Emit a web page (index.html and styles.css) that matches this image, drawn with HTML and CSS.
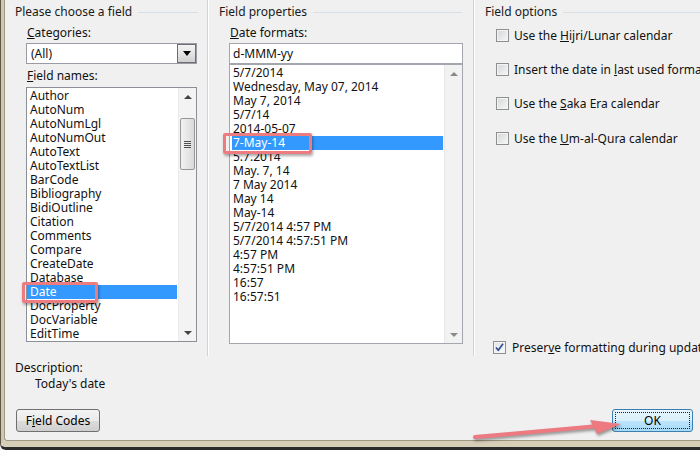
FILE: index.html
```html
<!DOCTYPE html>
<html>
<head>
<meta charset="utf-8">
<link rel="stylesheet" href="styles.css">
</head>
<body>
<div class="window">
  <div class="frame">
    <div class="client">
      <div class="columns">
        <section class="col col-left">
          <div class="group-title">Please choose a field</div>
          <div class="col-body">
            <div class="label lbl-first"><u>C</u>ategories:</div>
            <div class="combo">
              <span class="combo-text">(All)</span>
              <span class="combo-btn"><span class="tri-down"></span></span>
            </div>
            <div class="label lbl-names"><u>F</u>ield names:</div>
            <div class="listbox names">
              <ul class="items">
                <li>Author</li>
                <li>AutoNum</li>
                <li>AutoNumLgl</li>
                <li>AutoNumOut</li>
                <li>AutoText</li>
                <li>AutoTextList</li>
                <li>BarCode</li>
                <li>Bibliography</li>
                <li>BidiOutline</li>
                <li>Citation</li>
                <li>Comments</li>
                <li>Compare</li>
                <li>CreateDate</li>
                <li>Database</li>
                <li class="sel">Date</li>
                <li>DocProperty</li>
                <li>DocVariable</li>
                <li>EditTime</li>
              </ul>
              <div class="vscroll">
                <span class="sb-arrow"><span class="tri-up"></span></span>
                <span class="thumb"><span class="grip"></span></span>
                <span class="sb-arrow bottom"><span class="tri-down small"></span></span>
              </div>
            </div>
          </div>
        </section>
        <div class="sep"></div>
        <section class="col col-mid">
          <div class="group-title">Field properties</div>
          <div class="col-body">
            <div class="label lbl-first"><u>D</u>ate formats:</div>
            <div class="textbox">d-MMM-yy</div>
            <div class="listbox formats">
              <ul class="items">
                <li>5/7/2014</li>
                <li>Wednesday, May 07, 2014</li>
                <li>May 7, 2014</li>
                <li>5/7/14</li>
                <li>2014-05-07</li>
                <li class="sel">7-May-14</li>
                <li>5.7.2014</li>
                <li>May. 7, 14</li>
                <li>7 May 2014</li>
                <li>May 14</li>
                <li>May-14</li>
                <li>5/7/2014 4:57 PM</li>
                <li>5/7/2014 4:57:51 PM</li>
                <li>4:57 PM</li>
                <li>4:57:51 PM</li>
                <li>16:57</li>
                <li>16:57:51</li>
              </ul>
              <div class="vscroll flat">
                <span class="sb-arrow"><span class="tri-up light"></span></span>
                <span class="sb-arrow bottom"><span class="tri-down small light"></span></span>
              </div>
            </div>
          </div>
        </section>
        <div class="sep"></div>
        <section class="col col-right">
          <div class="group-title">Field options</div>
          <div class="opt opt-1"><span class="check"></span><span>Use the <u>H</u>ijri/Lunar calendar</span></div>
          <div class="opt"><span class="check"></span><span>Insert the date in <u>l</u>ast used format</span></div>
          <div class="opt"><span class="check"></span><span>Use the <u>S</u>aka Era calendar</span></div>
          <div class="opt opt-4"><span class="check"></span><span>Use the <u>U</u>m-al-Qura calendar</span></div>
          <div class="opt preserve">
            <span class="check checked"><svg width="11" height="11" viewBox="0 0 11 11"><path d="M2 5.5 L4.3 8.3 L9 1.8" fill="none" stroke="#2f4f92" stroke-width="1.7" stroke-linejoin="round"/></svg></span>
            <span>Preser<u>v</u>e formatting during updates</span>
          </div>
        </section>
      </div>
      <div class="footer">
        <div class="desc-label">Description:</div>
        <div class="desc-value">Today's date</div>
        <div class="buttons">
          <button class="btn btn-codes">F<u>i</u>eld Codes</button>
          <button class="btn btn-ok"><span class="focus">OK</span></button>
        </div>
      </div>
    </div>
  </div>
  <div class="mark mark-date"></div>
  <div class="mark mark-format"></div>
  <svg class="arrow" width="700" height="450" viewBox="0 0 700 450">
    <path d="M474 437 L598 426" stroke="#ec7a80" stroke-width="4" stroke-linecap="round" fill="none"/>
    <polygon points="589,420 620,424 596,434" fill="#ec7a80"/>
  </svg>
</div>
</body>
</html>
```

FILE: styles.css
```css
* { box-sizing: border-box; }

body {
  margin: 0;
  background: #f0f0f0;
  font-family: "Noto Sans", "Open Sans", sans-serif;
  font-size: 12px;
  color: #111;
}

u { text-decoration: underline; text-underline-offset: 1px; }

.window {
  position: relative;
  width: 700px;
  height: 450px;
  overflow: hidden;
  border-left: 1px solid #5e5646;
  border-bottom: 3px solid #2b2b2b;
  border-bottom-left-radius: 6px;
  background: #f0f0f0;
}

.frame {
  border-left: 3px solid #cfc6ac;
  border-bottom: 6px solid #d6ceb6;
  border-bottom-left-radius: 5px;
}

.client {
  width: 696px;
  height: 441px;
  border-left: 1px solid #9f9886;
  border-bottom: 1px solid #9f9886;
  border-bottom-left-radius: 3px;
  display: flex;
  flex-direction: column;
  background: #f0f0f0;
}

.columns {
  display: flex;
  height: 356px;
}

.col { display: flex; flex-direction: column; }
.col-left { width: 202px; }
.col-mid { width: 264px; }
.col-right { flex: 1; min-width: 0; }

.sep {
  width: 2px;
  border-left: 1px solid #d2d2d2;
  border-right: 1px solid #ffffff;
}

.group-title {
  display: flex;
  align-items: center;
  height: 16px;
  line-height: 16px;
  margin-top: 4px;
  padding-left: 10px;
  white-space: nowrap;
  color: #1a1a1a;
}
.group-title::after {
  content: "";
  flex: 1;
  height: 1px;
  margin-left: 6px;
  background: #d9e0e5;
}
.col-left .group-title { margin-right: 9px; }
.col-mid .group-title { margin-right: 11px; }

.col-body { padding-left: 21px; display: flex; flex-direction: column; }
.col-mid .col-body { padding-left: 20px; }

.label { line-height: 16px; padding-left: 1px; white-space: nowrap; }
.lbl-first { margin-top: 5px; }
.lbl-names { margin-top: 4px; }

.combo {
  display: flex;
  width: 171px;
  height: 21px;
  margin-top: 2px;
  border: 1px solid #9a9ca3;
  background: #fff;
}
.combo-text { flex: 1; padding-left: 4px; line-height: 19px; }
.combo-btn {
  width: 19px;
  margin: 0;
  border: 1px solid #6f6f6f;
  background: linear-gradient(#f4f4f4, #e4e4e4 50%, #cfcfcf);
  display: flex;
  align-items: center;
  justify-content: center;
}

.tri-down {
  width: 0; height: 0;
  border-left: 4px solid transparent;
  border-right: 4px solid transparent;
  border-top: 5px solid #000;
}
.tri-down.small { border-left-width: 4px; border-right-width: 4px; border-top: 4px solid #444; }
.tri-up {
  width: 0; height: 0;
  border-left: 4px solid transparent;
  border-right: 4px solid transparent;
  border-bottom: 4px solid #444;
}
.tri-up.light { border-bottom-color: #8a8a8a; }
.tri-down.light { border-top-color: #8a8a8a; }

.textbox {
  width: 234px;
  height: 21px;
  margin-top: 2px;
  border: 1px solid #a3a6ad;
  background: #fff;
  line-height: 19px;
  padding-left: 3px;
}

.listbox {
  display: flex;
  width: 171px;
  height: 255px;
  margin-top: 3px;
  border: 1px solid #8c8f96;
  background: #fff;
  overflow: hidden;
}
.listbox.formats {
  width: 234px;
  height: 280px;
  margin-top: 0;
  border-color: #a3a6ad;
}

.items {
  list-style: none;
  margin: 0;
  padding: 1px 1px 0 0;
  flex: 1;
  min-width: 0;
}
.formats .items { padding: 1px 1px 0 2px; }
.items li {
  height: 14px;
  line-height: 14px;
  padding-left: 3px;
  white-space: nowrap;
}
.formats .items li { padding-left: 1px; }
.items li.sel { background: #3399ff; color: #fff; }

.vscroll {
  width: 18px;
  display: flex;
  flex-direction: column;
  align-items: stretch;
  background: #f3f3f3;
  border-left: 1px solid #ececec;
}
.vscroll.flat { background: #f2f2f2; border-left: 1px solid #e6e6e6; }
.sb-arrow {
  height: 17px;
  display: flex;
  align-items: center;
  justify-content: center;
}
.sb-arrow.bottom { margin-top: auto; }
.thumb {
  margin: 13px 1px 0 1px;
  height: 52px;
  border: 1px solid #979797;
  border-radius: 2px;
  background: linear-gradient(90deg, #f2f2f2, #e6e6e6 50%, #d9d9d9);
  display: flex;
  align-items: center;
  justify-content: center;
}
.grip {
  width: 7px;
  height: 7px;
  background: repeating-linear-gradient(#505050 0 1px, transparent 1px 2px);
}

.opt {
  display: flex;
  align-items: center;
  gap: 5px;
  height: 14px;
  margin-left: 21px;
  margin-top: 20px;
  white-space: nowrap;
}
.opt-1 { margin-top: 8px; }
.opt-4 { margin-top: 21px; }
.preserve { margin-top: auto; margin-bottom: 2px; margin-left: 18px; gap: 6px; }

.check {
  flex: none;
  width: 13px;
  height: 13px;
  border: 1px solid #8e8f8f;
  background: linear-gradient(135deg, #d4d6d9, #f7f7f7);
  box-shadow: inset 0 0 0 1px #f4f4f4;
  display: flex;
  align-items: center;
  justify-content: center;
}
.check.checked { background: linear-gradient(135deg, #dfe2e6, #fbfbfb); }

.footer {
  flex: 1;
  display: flex;
  flex-direction: column;
  padding: 4px 7px 8px 10px;
}
.desc-label { line-height: 16px; }
.desc-value { line-height: 16px; padding-left: 20px; }

.buttons {
  margin-top: auto;
  display: flex;
  justify-content: space-between;
  padding-left: 1px;
}
.btn {
  height: 23px;
  font-family: inherit;
  font-size: 12px;
  color: #000;
  border-radius: 3px;
  padding: 0;
}
.btn-codes {
  width: 84px;
  border: 1px solid #707070;
  background: linear-gradient(#f3f3f3, #ebebeb 50%, #dddddd 51%, #cfcfcf);
}
.btn-ok {
  width: 81px;
  border: 1px solid #3c7fb1;
  background: linear-gradient(#e8f5fc, #d9effa 50%, #bee6fd 51%, #a7d9f5);
  padding: 2px;
  display: flex;
}
.btn-ok .focus {
  flex: 1;
  border: 1px dotted #222;
  display: flex;
  align-items: center;
  justify-content: center;
}

.mark {
  position: absolute;
  border: 3px solid #ec7c80;
  border-radius: 2px;
  box-shadow: 1px 2px 3px rgba(0, 0, 0, 0.35);
}
.mark-date { left: 21px; top: 282px; width: 76px; height: 21px; }
.mark-format { left: 222px; top: 133px; width: 89px; height: 21px; }

.arrow {
  position: absolute;
  left: 0;
  top: 0;
  pointer-events: none;
  filter: drop-shadow(1px 2px 1.5px rgba(0, 0, 0, 0.4));
}
```
